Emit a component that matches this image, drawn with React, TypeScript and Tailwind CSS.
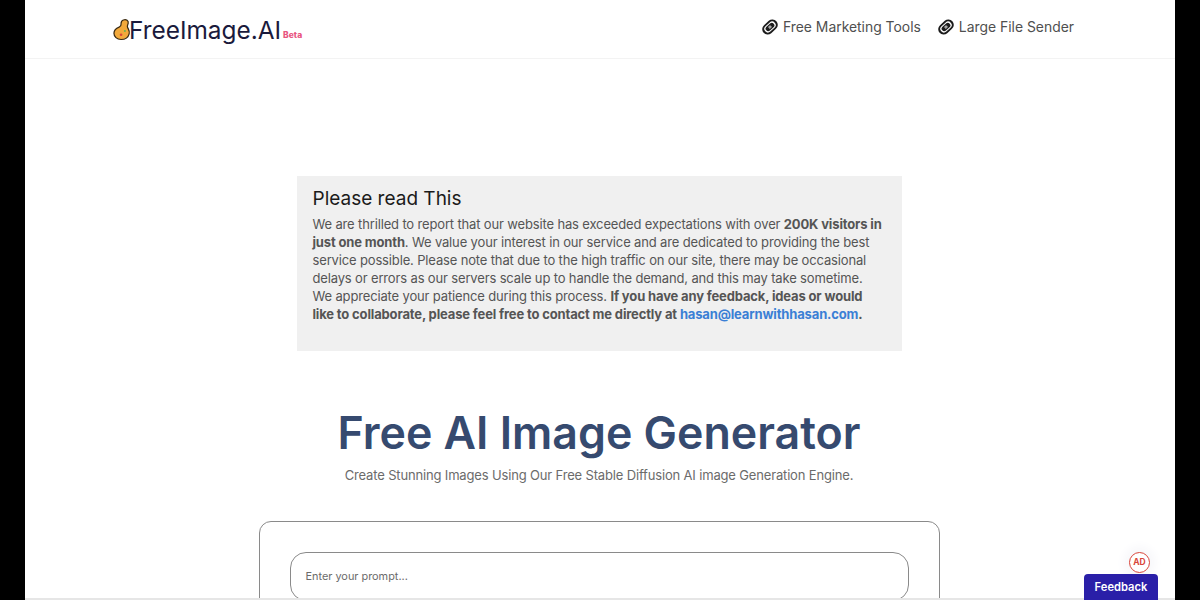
import React from 'react';

const Pill: React.FC = () => (
  <svg width="18" height="18" viewBox="0 0 18 18" fill="none" className="shrink-0">
    <g transform="rotate(-42 9 9)">
      <rect x="0.4" y="3.6" width="17.2" height="10.8" rx="5.4" fill="#1c1c1c" />
      <rect x="2.6" y="5.4" width="12.8" height="7.2" rx="3.6" fill="#fff" />
      <rect x="4" y="6.4" width="10" height="5.2" rx="2.6" fill="#1c1c1c" />
      <circle cx="9" cy="9" r="1.500" fill="#fff" />
      <circle cx="9" cy="9" r="0.700" fill="#1c1c1c" />
    </g>
  </svg>
);

const Logo: React.FC = () => (
  <svg width="19" height="24" viewBox="0 0 20 24" className="shrink-0">
    <path d="M11 1.5c3 -1 5.500 .8 5 3.300-.4 2 -1.500 2.700 -.6 4.700 1 2.200 2.400 3.500 1.600 6.500-1 3.800 -4.500 6 -8.500 6-4.500 0 -7.500 -3 -7.500 -6.500 0 -3.700 3 -5.500 5.500 -6.500 2.500 -1 2 -2.500 2 -4 0 -1.500 1 -3 2.500 -3.500z" fill="#f2a93b" stroke="#3a2a12" strokeWidth="1.300" />
    <circle cx="8.500" cy="17" r="1.400" fill="#d9453a" />
    <circle cx="12.500" cy="13" r="1.100" fill="#6cb24a" />
  </svg>
);

export default function App() {
  return (
    <div className="h-[600px] overflow-hidden bg-black px-[25px] font-['Inter',sans-serif]">
      <div className="relative h-[600px] overflow-hidden bg-white">
        <header className="flex h-[59px] items-center justify-between border-b border-[#f3f3f3] pl-[88px] pr-[101px]">
          <div className="mt-[2px] flex items-center">
            <Logo />
            <span className="ml-[-3px] text-[24.400px] leading-none text-[#1a1a3c]">FreeImage.AI</span>
            <span className="ml-[2px] mt-[11px] text-[8.500px] font-extrabold text-[#e8557f]">Beta</span>
          </div>
          <nav className="mb-[3px] flex items-center gap-[16px] text-[13.900px] text-[#4f4f4f]">
            <a className="flex items-center gap-[4px]"><Pill />Free Marketing Tools</a>
            <a className="flex items-center gap-[4px]"><Pill />Large File Sender</a>
          </nav>
        </header>

        <main className="flex flex-col items-center pr-[2px]">
          <section className="mt-[117px] h-[175px] w-[605px] bg-[#f0f0f0] px-[16px] pt-[11px]">
            <h2 className="text-[19px] leading-[23px] text-[#1b1b1b]">Please read This</h2>
            <p className="mt-[5px] whitespace-nowrap text-[13px] leading-[18px] tracking-[-0.15px] text-[#555555]">
              We are thrilled to report that our website has exceeded expectations with over <b>200K visitors in</b>
              <br />
              <b>just one month</b>. We value your interest in our service and are dedicated to providing the best
              <br />
              service possible. Please note that due to the high traffic on our site, there may be occasional
              <br />
              delays or errors as our servers scale up to handle the demand, and this may take sometime.
              <br />
              We appreciate your patience during this process. <b>If you have any feedback, ideas or would</b>
              <br />
              <b>like to collaborate, please feel free to contact me directly at </b>
              <a className="font-bold text-[#3a7fd5]">hasan@learnwithhasan.com</a>
              <b>.</b>
            </p>
          </section>

          <h1 className="mt-[54px] text-[44.700px] font-semibold leading-[56px] text-[#364a6f]">Free AI Image Generator</h1>
          <p className="mt-[4px] text-[13px] leading-[20px] tracking-[-0.16px] text-[#6b6b6b]">
            Create Stunning Images Using Our Free Stable Diffusion AI image Generation Engine.
          </p>

          <div className="mt-[36px] h-[120px] w-[681px] rounded-[12px] border border-[#8a8a8a] px-[30px] pt-[30px]">
            <div className="flex h-[49px] items-center rounded-[16px] border border-[#8a8a8a] pl-[15px] text-[10.900px] text-[#6b6b6b]">
              Enter your prompt...
            </div>
          </div>
        </main>

        <div className="absolute bottom-0 left-0 right-0 h-[2px] bg-[#e6e6e6]" />

        <div className="absolute bottom-[27px] right-[25px] flex h-[21px] w-[21px] items-center justify-center rounded-full border-[1.500px] border-[#d9453a] bg-white text-[8.500px] font-bold text-[#d9453a] shadow-[0_0_10px_6px_#f8f8fb]">
          AD
        </div>
        <button className="absolute bottom-0 right-[17px] h-[26px] w-[74px] rounded-t-[4px] bg-[#2a1fa8] text-[11.200px] font-semibold text-white">
          Feedback
        </button>
      </div>
    </div>
  );
}
